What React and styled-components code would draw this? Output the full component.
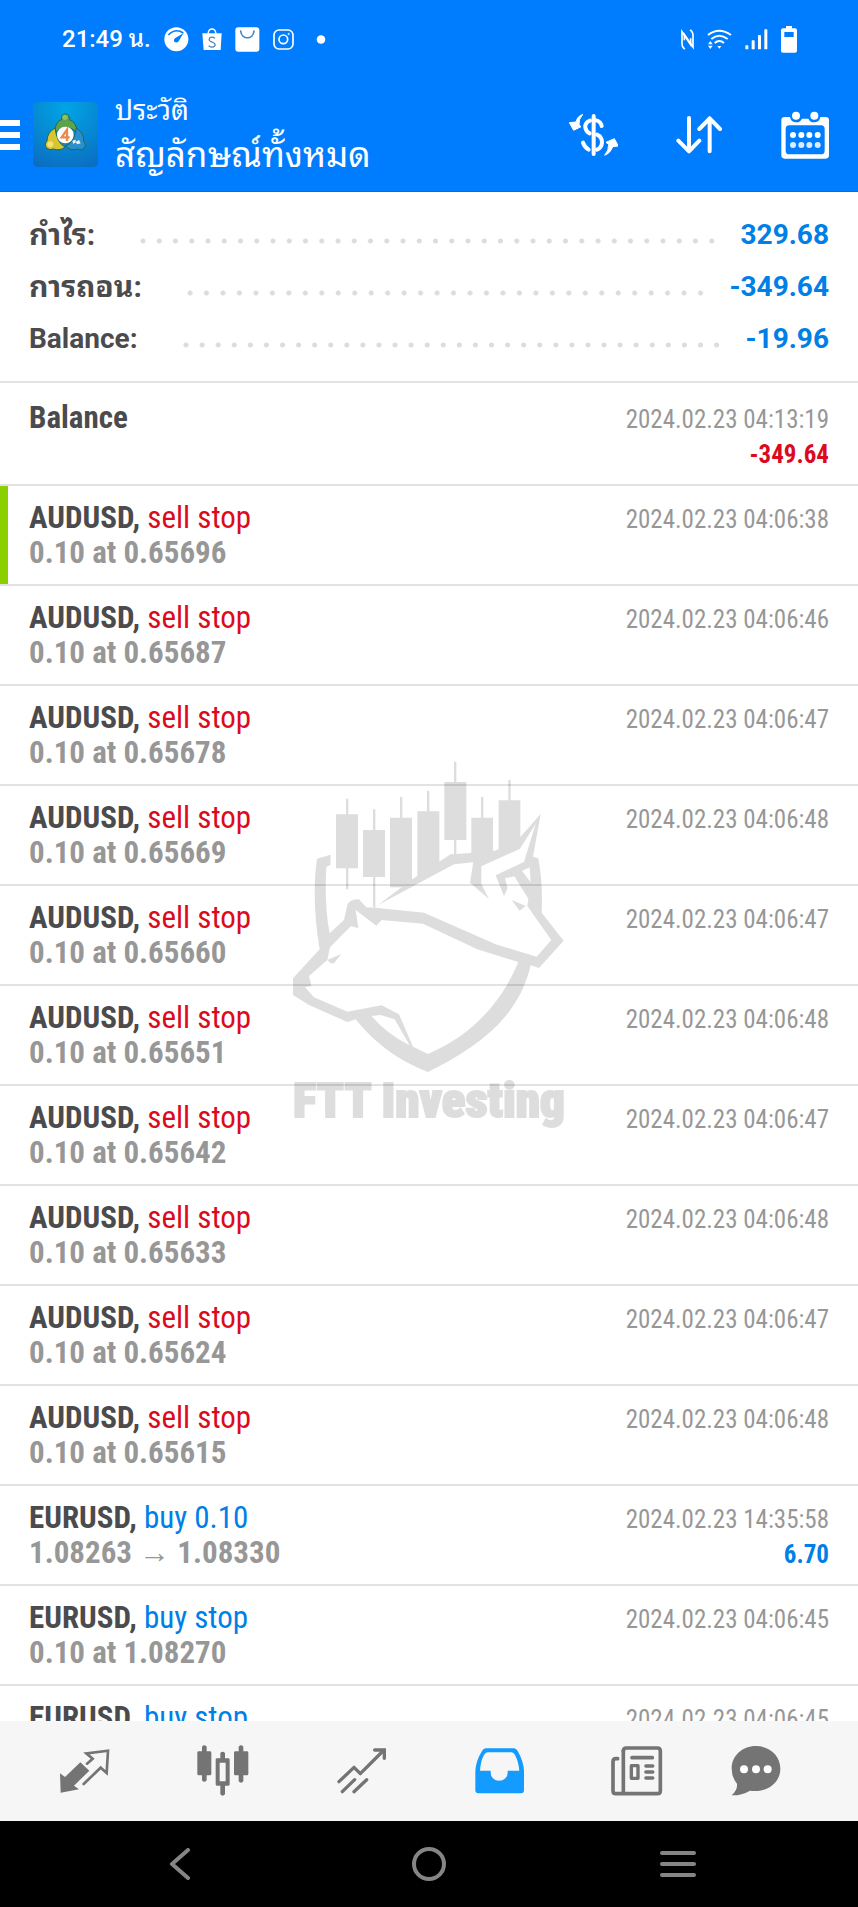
import React from "react";
import styled, { createGlobalStyle, css } from "styled-components";

const blue = "#007dff";
const ink = "#4b4b4d";
const muted = "#979797";
const tones = { sell: "#dc0a1e", buy: "#0080e6" };

const GlobalStyle = createGlobalStyle`
  * { box-sizing: border-box; }
  body { margin: 0; background: #fff; }
  button { border: 0; padding: 0; background: none; color: inherit; font: inherit; cursor: pointer; }
  svg { display: block; flex: none; }
`;

const Screen = styled.div`
  position: relative;
  display: flex;
  flex-direction: column;
  height: 100vh;
  overflow: hidden;
  background: #fff;
  color: ${ink};
  font-family: Roboto, "Noto Sans Thai Looped", "Noto Looped Thai", Loma, Waree, Garuda, "Noto Sans", sans-serif;
`;

const Header = styled.header`
  flex: none;
  background: ${blue};
  color: #fff;
  border-bottom: 1px solid #006fd6;
`;

const StatusBar = styled.div`
  display: flex;
  align-items: center;
  justify-content: space-between;
  height: 78px;
  padding: 0 61px 0 62px;
`;

const StatusGroup = styled.div`
  display: flex;
  align-items: center;
  gap: 13px;
`;

const Clock = styled.time`
  font-size: 24px;
  font-weight: 500;
  line-height: 28px;
  white-space: nowrap;
`;

const AppBar = styled.div`
  display: flex;
  align-items: center;
  height: 113px;
`;

const MenuButton = styled.button`
  display: flex;
  flex-direction: column;
  gap: 6px;
  width: 20px;
  margin-right: 13px;
`;

const MenuLine = styled.span`
  height: 6px;
  background: #fff;
`;

const Titles = styled.div`
  flex: 1;
  min-width: 0;
  padding-left: 17px;
`;

const Overline = styled.div`
  font-size: 28px;
  line-height: 42px;
`;

const Title = styled.h1`
  margin: 0;
  font-size: 35px;
  font-weight: 400;
  line-height: 48px;
  white-space: nowrap;
`;

const ActionButton = styled.button`
  display: flex;
  flex: none;
  align-items: center;
  justify-content: center;
  width: 106px;
  height: 100%;
`;

const Summary = styled.dl`
  flex: none;
  margin: 0;
  padding: 17px 29px 16px;
`;

const SummaryRow = styled.div`
  display: flex;
  height: 52px;
  font-size: 28px;
  font-weight: 700;
  line-height: 52px;
`;

const SummaryLabel = styled.dt`
  &:lang(th) {
    font-size: 30px;
  }
`;

const Leader = styled.span`
  flex: 1;
  align-self: center;
  height: 6px;
  margin: 12px 21px 0 40px;
  background: radial-gradient(circle at center, #dcdcdc 2px, transparent 3px) space;
  background-size: 16px 6px;
`;

const SummaryValue = styled.dd`
  margin: 0;
  color: #0080e6;
`;

const History = styled.ul`
  flex: 1;
  min-height: 0;
  margin: 0;
  padding: 0;
  overflow: hidden;
  list-style: none;
  font-family: "Roboto Condensed", "Liberation Sans Narrow", Roboto, sans-serif;
`;

const Entry = styled.li`
  padding: 14px 29px;
  border-top: 2px solid #e2e2e2;
  ${(p) => p.$lead && css`padding-top: 17px;`}
  ${(p) =>
    p.$marked &&
    css`
      background: linear-gradient(#8ccf00, #8ccf00) left / 8px 100% no-repeat;
    `}
`;

const Line = styled.div`
  display: flex;
  align-items: baseline;
  justify-content: space-between;
  height: 35px;
  line-height: 35px;
  font-size: 31px;
  white-space: nowrap;
`;

const Symbol = styled.strong`
  font-weight: 700;
`;

const Kind = styled.span`
  color: ${(p) => tones[p.$tone]};
`;

const Detail = styled.span`
  color: ${muted};
  font-weight: 700;
`;

const Stamp = styled.time`
  color: ${muted};
  font-size: 25px;
`;

const Amount = styled.strong`
  color: ${(p) => tones[p.$tone]};
  font-size: 25px;
  font-weight: 700;
`;

const Watermark = styled.div`
  position: absolute;
  inset: 750px 0 auto;
  display: flex;
  flex-direction: column;
  align-items: center;
  color: #000;
  opacity: 0.13;
  pointer-events: none;
`;

const WatermarkText = styled.span`
  font-family: "Roboto Condensed", "Liberation Sans Narrow", sans-serif;
  font-size: 49px;
  font-weight: 900;
  line-height: 56px;
  white-space: nowrap;
  -webkit-text-stroke: 2px #000;
`;

const TabBar = styled.nav`
  display: flex;
  flex: none;
  height: 100px;
  padding: 0 52px 0 16px;
  background: #f6f6f6;
`;

const Tab = styled.button`
  display: flex;
  flex: ${(p) => (p.$narrow ? 100 : 138)} 1 0;
  align-items: center;
  justify-content: center;
  color: ${(p) => (p.$active ? "#149bff" : "#747474")};
`;

const SystemBar = styled.footer`
  display: flex;
  flex: none;
  height: 86px;
  padding: 0 56px;
  background: #000;
  color: #858585;
`;

const SystemButton = styled.button`
  display: flex;
  flex: 1;
  align-items: center;
  justify-content: center;
`;

const GaugeIcon = () => (
  <svg width="25" height="25" viewBox="0 0 75 75">
    <circle cx="37" cy="37" r="36" fill="#fff" />
    <path d="M13 24Q34 2 58 18" fill="none" stroke={blue} strokeWidth="5" />
    <path d="M58 19L44 43Q36 50 30 43Q28 37 34 33Z" fill={blue} />
  </svg>
);

const ShopIcon = () => (
  <svg width="20" height="23" viewBox="0 0 60 69">
    <path d="M1 16H59L56 66H5Z" fill="#fff" />
    <path d="M18 17Q20 3 30 3T42 17" fill="none" stroke="#fff" strokeWidth="4" />
    <path d="M39 31Q30 24 23 30Q18 39 30 42Q43 47 38 54Q31 61 20 53" fill="none" stroke="#4a86b4" strokeWidth="4" />
  </svg>
);

const BagIcon = () => (
  <svg width="25" height="25" viewBox="0 0 75 75">
    <rect x="1" y="1" width="72" height="73" rx="9" fill="#fff" />
    <path d="M17 12C20 39 54 39 57 12" fill="none" stroke="#3c86cc" strokeWidth="5" strokeLinecap="round" />
  </svg>
);

const CameraIcon = () => (
  <svg width="21" height="21" viewBox="0 0 63 63" fill="none" stroke="#fff" strokeWidth="5">
    <rect x="3" y="3" width="57" height="57" rx="15" />
    <circle cx="31" cy="31" r="13" />
    <circle cx="47" cy="15" r="2" strokeWidth="3" />
  </svg>
);

const DotIcon = () => (
  <svg width="29" height="9" viewBox="0 0 29 9">
    <circle cx="14" cy="4.5" r="4.3" fill="#fff" />
  </svg>
);

const NfcIcon = () => (
  <svg width="13" height="21" viewBox="0 0 39 63" fill="none" stroke="#fff" strokeWidth="5">
    <path d="M12 60Q2 55 3 38V8L29 47V28" />
    <path d="M27 3Q37 8 36 24V54L10 16V34" />
  </svg>
);

const WifiIcon = () => (
  <svg width="25" height="21" viewBox="0 0 75 63" fill="none" stroke="#fff" strokeWidth="6">
    <path d="M3 18Q36 -8 72 18" />
    <path d="M13 30Q36 10 62 30" />
    <path d="M23 42Q37 30 51 42" />
    <path d="M31 51H43L37 59ZM3 46L10 36L17 46ZM3 50L10 60L17 50Z" fill="#fff" stroke="none" />
  </svg>
);

const SignalIcon = () => (
  <svg width="23" height="21" viewBox="0 0 69 63" fill="#fff">
    <rect x="1" y="49" width="9" height="12" rx="2" />
    <rect x="20" y="34" width="9" height="27" rx="2" />
    <rect x="39" y="18" width="9" height="43" rx="2" />
    <rect x="58" y="1" width="9" height="60" rx="2" />
  </svg>
);

const BatteryIcon = () => (
  <svg width="16" height="27" viewBox="0 0 48 81">
    <path
      d="M15 0H33V7H42Q48 7 48 13V74Q48 80 42 80H6Q0 80 0 74V13Q0 7 6 7H15ZM10 18V33H38V18Z"
      fill="#fff"
      fillRule="evenodd"
    />
  </svg>
);

const AppLogo = () => (
  <svg width="65" height="65" viewBox="0 0 195 195">
    <defs>
      <radialGradient id="tile" cx="0.5" cy="0.1" r="1">
        <stop offset="0" stopColor="#00a5e6" />
        <stop offset="0.6" stopColor="#0784cf" />
        <stop offset="1" stopColor="#0a6cc0" />
      </radialGradient>
    </defs>
    <rect width="195" height="195" rx="14" fill="url(#tile)" />
    <g stroke="#2b6550" strokeWidth="3">
      <path d="M66 92Q66 57 86 53Q84 36 97 36Q110 36 109 53Q132 60 132 92Q118 76 99 77Q80 77 66 92Z" fill="#5ba44c" />
      <path d="M66 78Q42 92 42 117Q32 128 42 139Q50 146 61 141Q82 148 96 135Q72 124 66 78Z" fill="#d9c52e" />
      <path d="M130 78Q154 94 152 118Q162 130 152 140Q144 146 134 141Q112 148 98 132Q124 122 130 78Z" fill="#2890cf" />
    </g>
    <circle cx="96" cy="46" r="8" fill="#8cc25d" />
    <circle cx="52" cy="127" r="9" fill="#f2e273" />
    <path d="M118 116L128 113V120L138 114L143 124L133 127L128 121L121 126Z" fill="#e4f3fb" />
    <circle cx="97" cy="99" r="25" fill="#fff" />
    <path d="M102 117V83L86 106H110" fill="none" stroke="#e88a4c" strokeWidth="7" />
  </svg>
);

const CurrencyIcon = () => (
  <svg width="49" height="42" viewBox="413 342 147 126" fill="none" stroke="#fff" strokeWidth="12" strokeLinecap="round">
    <path d="M487 348V462" />
    <path d="M476 362Q460 368 462 383Q464 395 475 400" />
    <path d="M495 361Q508 364 511 378" />
    <path d="M497 404Q512 410 512 427Q511 443 497 449" />
    <path d="M455 428Q459 441 472 449" />
    <path d="M453 344Q438 348 434 366L414 368L427 391L449 380L443 375Q441 358 453 344Z" fill="#fff" stroke="#fff" strokeWidth="3" />
    <path d="M521 465Q537 460 544 440L561 438L549 416L524 427L532 433Q533 450 521 465Z" fill="#fff" stroke="#fff" strokeWidth="3" />
  </svg>
);

const SortIcon = () => (
  <svg width="46" height="38" viewBox="736 347 138 114" fill="none" stroke="#fff" strokeWidth="12" strokeLinecap="round" strokeLinejoin="round">
    <path d="M775 353V453M743 421L775 453L806 421" />
    <path d="M837 453V354M806 386L837 354L868 386" />
  </svg>
);

const CalendarIcon = () => (
  <svg width="48" height="48" viewBox="1049 330 144 144">
    <path
      d="M1060 348H1076A19 19 0 0 0 1112 353H1131A19 19 0 0 0 1167 348H1183Q1193 348 1193 358V463Q1193 473 1183 473H1060Q1050 473 1050 463V358Q1050 348 1060 348ZM1074 373Q1063 373 1063 384V449Q1063 460 1074 460H1169Q1180 460 1180 449V384Q1180 373 1169 373Z"
      fill="#fff"
      fillRule="evenodd"
    />
    <g fill="#fff">
      <circle cx="1094" cy="344" r="12" />
      <circle cx="1149" cy="344" r="12" />
      {[1085, 1110, 1134, 1159].map((x) => (
        <React.Fragment key={x}>
          <circle cx={x} cy="402" r="9" />
          <circle cx={x} cy="432" r="9" opacity="0.85" />
        </React.Fragment>
      ))}
    </g>
  </svg>
);

const QuotesIcon = () => (
  <svg width="50" height="44" viewBox="181 807 150 132">
    <path d="M242 847L269 872L223 917L238 928L183 938L181 880L196 891Z" fill="currentColor" />
    <path
      d="M262 851L279 836L260 820L325 812L321 879L303 863L252 912"
      fill="none"
      stroke="currentColor"
      strokeWidth="8"
      strokeLinecap="round"
    />
  </svg>
);

const ChartIcon = () => (
  <svg width="52" height="52" viewBox="590 796 156 156" fill="currentColor">
    <path d="M605 815V801Q612 793 619 801V815H629Q633 815 633 819V883Q633 887 629 887H619V902Q612 911 605 902V887H595Q591 887 591 883V819Q591 815 595 815Z" />
    <path d="M715 815V801Q722 793 729 801V815H740Q744 815 744 819V883Q744 887 740 887H729V905Q722 913 715 905V887H705Q701 887 701 883V819Q701 815 705 815Z" />
    <path
      d="M660 836V820Q667 812 674 820V836H684Q688 836 688 840V914Q688 918 684 918H674V944Q667 952 660 944V918H650Q646 918 646 914V840Q646 836 650 836ZM658 849V905H676V849Z"
      fillRule="evenodd"
    />
  </svg>
);

const TradeIcon = () => (
  <svg width="49" height="46" viewBox="1006 802 147 138" fill="none" stroke="currentColor" strokeWidth="10" strokeLinecap="round" strokeLinejoin="round">
    <path d="M1012 903L1057 860L1076 879L1144 811" />
    <path d="M1119 808H1148V833" strokeLinejoin="miter" />
    <path d="M1022 933L1059 897M1057 933L1095 897" />
  </svg>
);

const InboxIcon = () => (
  <svg width="49" height="46" viewBox="131 802 147 138">
    <path
      d="M163 803H248Q255 803 259 811Q276 840 278 870V929Q278 938 269 938H141Q132 938 132 929V870Q134 840 152 811Q156 803 163 803ZM169 815Q162 815 158 823Q147 844 146 870H178V877A25 23 0 0 0 229 877V870H264Q262 844 251 823Q247 815 241 815Z"
      fill="currentColor"
      fillRule="evenodd"
    />
  </svg>
);

const NewsIcon = () => (
  <svg width="52" height="50" viewBox="543 796 156 150" fill="none" stroke="currentColor" strokeWidth="11" strokeLinejoin="round">
    <path d="M580 811Q580 802 589 802H682Q691 802 691 811V930Q691 939 682 939H558Q549 939 549 930V843Q549 834 558 834H563" strokeLinecap="round" />
    <path d="M580 808V936" />
    <path d="M606 831H667M648 856H668M648 874H668M648 892H668" strokeLinecap="round" />
    <rect x="604" y="855" width="20" height="38" strokeWidth="10" />
  </svg>
);

const ChatIcon = () => (
  <svg width="50" height="50" viewBox="899 796 150 150">
    <path
      d="M974 796C1016 796 1047 826 1047 864C1047 906 1007 938 956 930Q930 945 901 944Q919 928 917 909Q901 890 901 864C901 826 932 796 974 796Z"
      fill="currentColor"
    />
    <g fill="#fff">
      <circle cx="938" cy="866" r="12" />
      <circle cx="974" cy="866" r="12" />
      <circle cx="1009" cy="866" r="12" />
    </g>
  </svg>
);

const BackIcon = () => (
  <svg width="22" height="32" viewBox="0 0 22 32" fill="none" stroke="currentColor" strokeWidth="4" strokeLinecap="round" strokeLinejoin="round">
    <path d="M19 2L3 16L19 30" />
  </svg>
);

const HomeIcon = () => (
  <svg width="36" height="36" viewBox="0 0 36 36" fill="none" stroke="currentColor" strokeWidth="4">
    <circle cx="18" cy="18" r="15" />
  </svg>
);

const RecentsIcon = () => (
  <svg width="36" height="28" viewBox="0 0 36 28" fill="none" stroke="currentColor" strokeWidth="4" strokeLinecap="round">
    <path d="M2 3H34M2 14H34M2 25H34" />
  </svg>
);

const BullBearMark = () => (
  <svg width="300" height="323" viewBox="0 0 900 969">
    <path d="M171 193H201V146H208V193H237V355H208V418H201V355H171ZM252 240H282V178H289V240H318V381H289V472H282V381H252ZM333 203H363V141H370V203H399V412H333ZM415 184H444V122H451V184H481V338L415 380ZM496 96H525V35H532V96H562V270H532V312H525V270H496ZM577 203H606V141H613V203H642V312H577ZM659 151H688V90H695V151H724V270L700 300H659Z" />
    <path
      fillRule="evenodd"
      d="M290 470L400 388L515 313L577 309L642 304L659 298L718 268L785 192L762 320L778 325Q792 400 788 488L854 572L780 654L755 646C720 800 600 890 447 966C350 930 280 870 230 808L205 816L90 765L42 735V685L122 598C105 500 103 400 114 326L155 314L154 345L142 350C138 420 140 490 152 550L195 510L205 465Q210 448 240 448L262 472L290 473ZM230 480L238 535L216 528L153 592L145 630L90 678L97 708L78 712L105 742L205 785L308 766L360 793L402 890L447 912C590 850 670 750 718 636L595 598L432 521L308 510L292 527ZM278 798L305 795L347 808L392 886Q320 850 278 798ZM290 469L525 343L583 337L573 398L630 447L607 402V349L722 297L770 222L735 336L650 376L675 438L686 415L678 385L706 379L748 446L745 468L817 570L773 620L650 583L435 488L290 473ZM729 363L752 352L755 397Z"
    />
    <path d="M145 630L187 612L165 640H155ZM698 450L740 468L722 482Z" />
  </svg>
);

const summary = [
  ["กำไร:", "329.68", "th"],
  ["การถอน:", "-349.64", "th"],
  ["Balance:", "-19.96", "en"],
];

const sell = (price, seconds) => ({
  symbol: "AUDUSD,",
  kind: "sell stop",
  tone: "sell",
  detail: `0.10 at ${price}`,
  stamp: `2024.02.23 04:06:${seconds}`,
});

const entries = [
  { symbol: "Balance", stamp: "2024.02.23 04:13:19", amount: "-349.64", tone: "sell", lead: true },
  { ...sell("0.65696", 38), marked: true },
  sell("0.65687", 46),
  sell("0.65678", 47),
  sell("0.65669", 48),
  sell("0.65660", 47),
  sell("0.65651", 48),
  sell("0.65642", 47),
  sell("0.65633", 48),
  sell("0.65624", 47),
  sell("0.65615", 48),
  { symbol: "EURUSD,", kind: "buy 0.10", tone: "buy", detail: "1.08263 → 1.08330", stamp: "2024.02.23 14:35:58", amount: "6.70" },
  { symbol: "EURUSD,", kind: "buy stop", tone: "buy", detail: "0.10 at 1.08270", stamp: "2024.02.23 04:06:45" },
  { symbol: "EURUSD,", kind: "buy stop", tone: "buy", stamp: "2024.02.23 04:06:45" },
];

const tabs = [
  ["Quotes", QuotesIcon],
  ["Chart", ChartIcon],
  ["Trade", TradeIcon],
  ["History", InboxIcon],
  ["News", NewsIcon],
  ["Messages", ChatIcon],
];

export default function App() {
  return (
    <Screen>
      <GlobalStyle />
      <Header>
        <StatusBar>
          <StatusGroup>
            <Clock>21:49 น.</Clock>
            <GaugeIcon />
            <ShopIcon />
            <BagIcon />
            <CameraIcon />
            <DotIcon />
          </StatusGroup>
          <StatusGroup>
            <NfcIcon />
            <WifiIcon />
            <SignalIcon />
            <BatteryIcon />
          </StatusGroup>
        </StatusBar>
        <AppBar>
          <MenuButton aria-label="Menu">
            <MenuLine />
            <MenuLine />
            <MenuLine />
          </MenuButton>
          <AppLogo />
          <Titles>
            <Overline>ประวัติ</Overline>
            <Title>สัญลักษณ์ทั้งหมด</Title>
          </Titles>
          <ActionButton aria-label="Symbols"><CurrencyIcon /></ActionButton>
          <ActionButton aria-label="Sort"><SortIcon /></ActionButton>
          <ActionButton aria-label="Period"><CalendarIcon /></ActionButton>
        </AppBar>
      </Header>
      <Summary>
        {summary.map(([label, value, lang]) => (
          <SummaryRow key={label}>
            <SummaryLabel lang={lang}>{label}</SummaryLabel>
            <Leader />
            <SummaryValue>{value}</SummaryValue>
          </SummaryRow>
        ))}
      </Summary>
      <History>
        {entries.map((e, i) => (
          <Entry key={i} $lead={e.lead} $marked={e.marked}>
            <Line>
              <span>
                <Symbol>{e.symbol}</Symbol> {e.kind && <Kind $tone={e.tone}>{e.kind}</Kind>}
              </span>
              <Stamp>{e.stamp}</Stamp>
            </Line>
            <Line>
              <Detail>{e.detail || "\u00a0"}</Detail>
              {e.amount && <Amount $tone={e.tone}>{e.amount}</Amount>}
            </Line>
          </Entry>
        ))}
      </History>
      <TabBar>
        {tabs.map(([label, Icon]) => (
          <Tab key={label} aria-label={label} $active={label === "History"} $narrow={label === "Messages"}>
            <Icon />
          </Tab>
        ))}
      </TabBar>
      <SystemBar>
        <SystemButton aria-label="Back"><BackIcon /></SystemButton>
        <SystemButton aria-label="Home"><HomeIcon /></SystemButton>
        <SystemButton aria-label="Recent apps"><RecentsIcon /></SystemButton>
      </SystemBar>
      <Watermark>
        <BullBearMark />
        <WatermarkText>FTT Investing</WatermarkText>
      </Watermark>
    </Screen>
  );
}
